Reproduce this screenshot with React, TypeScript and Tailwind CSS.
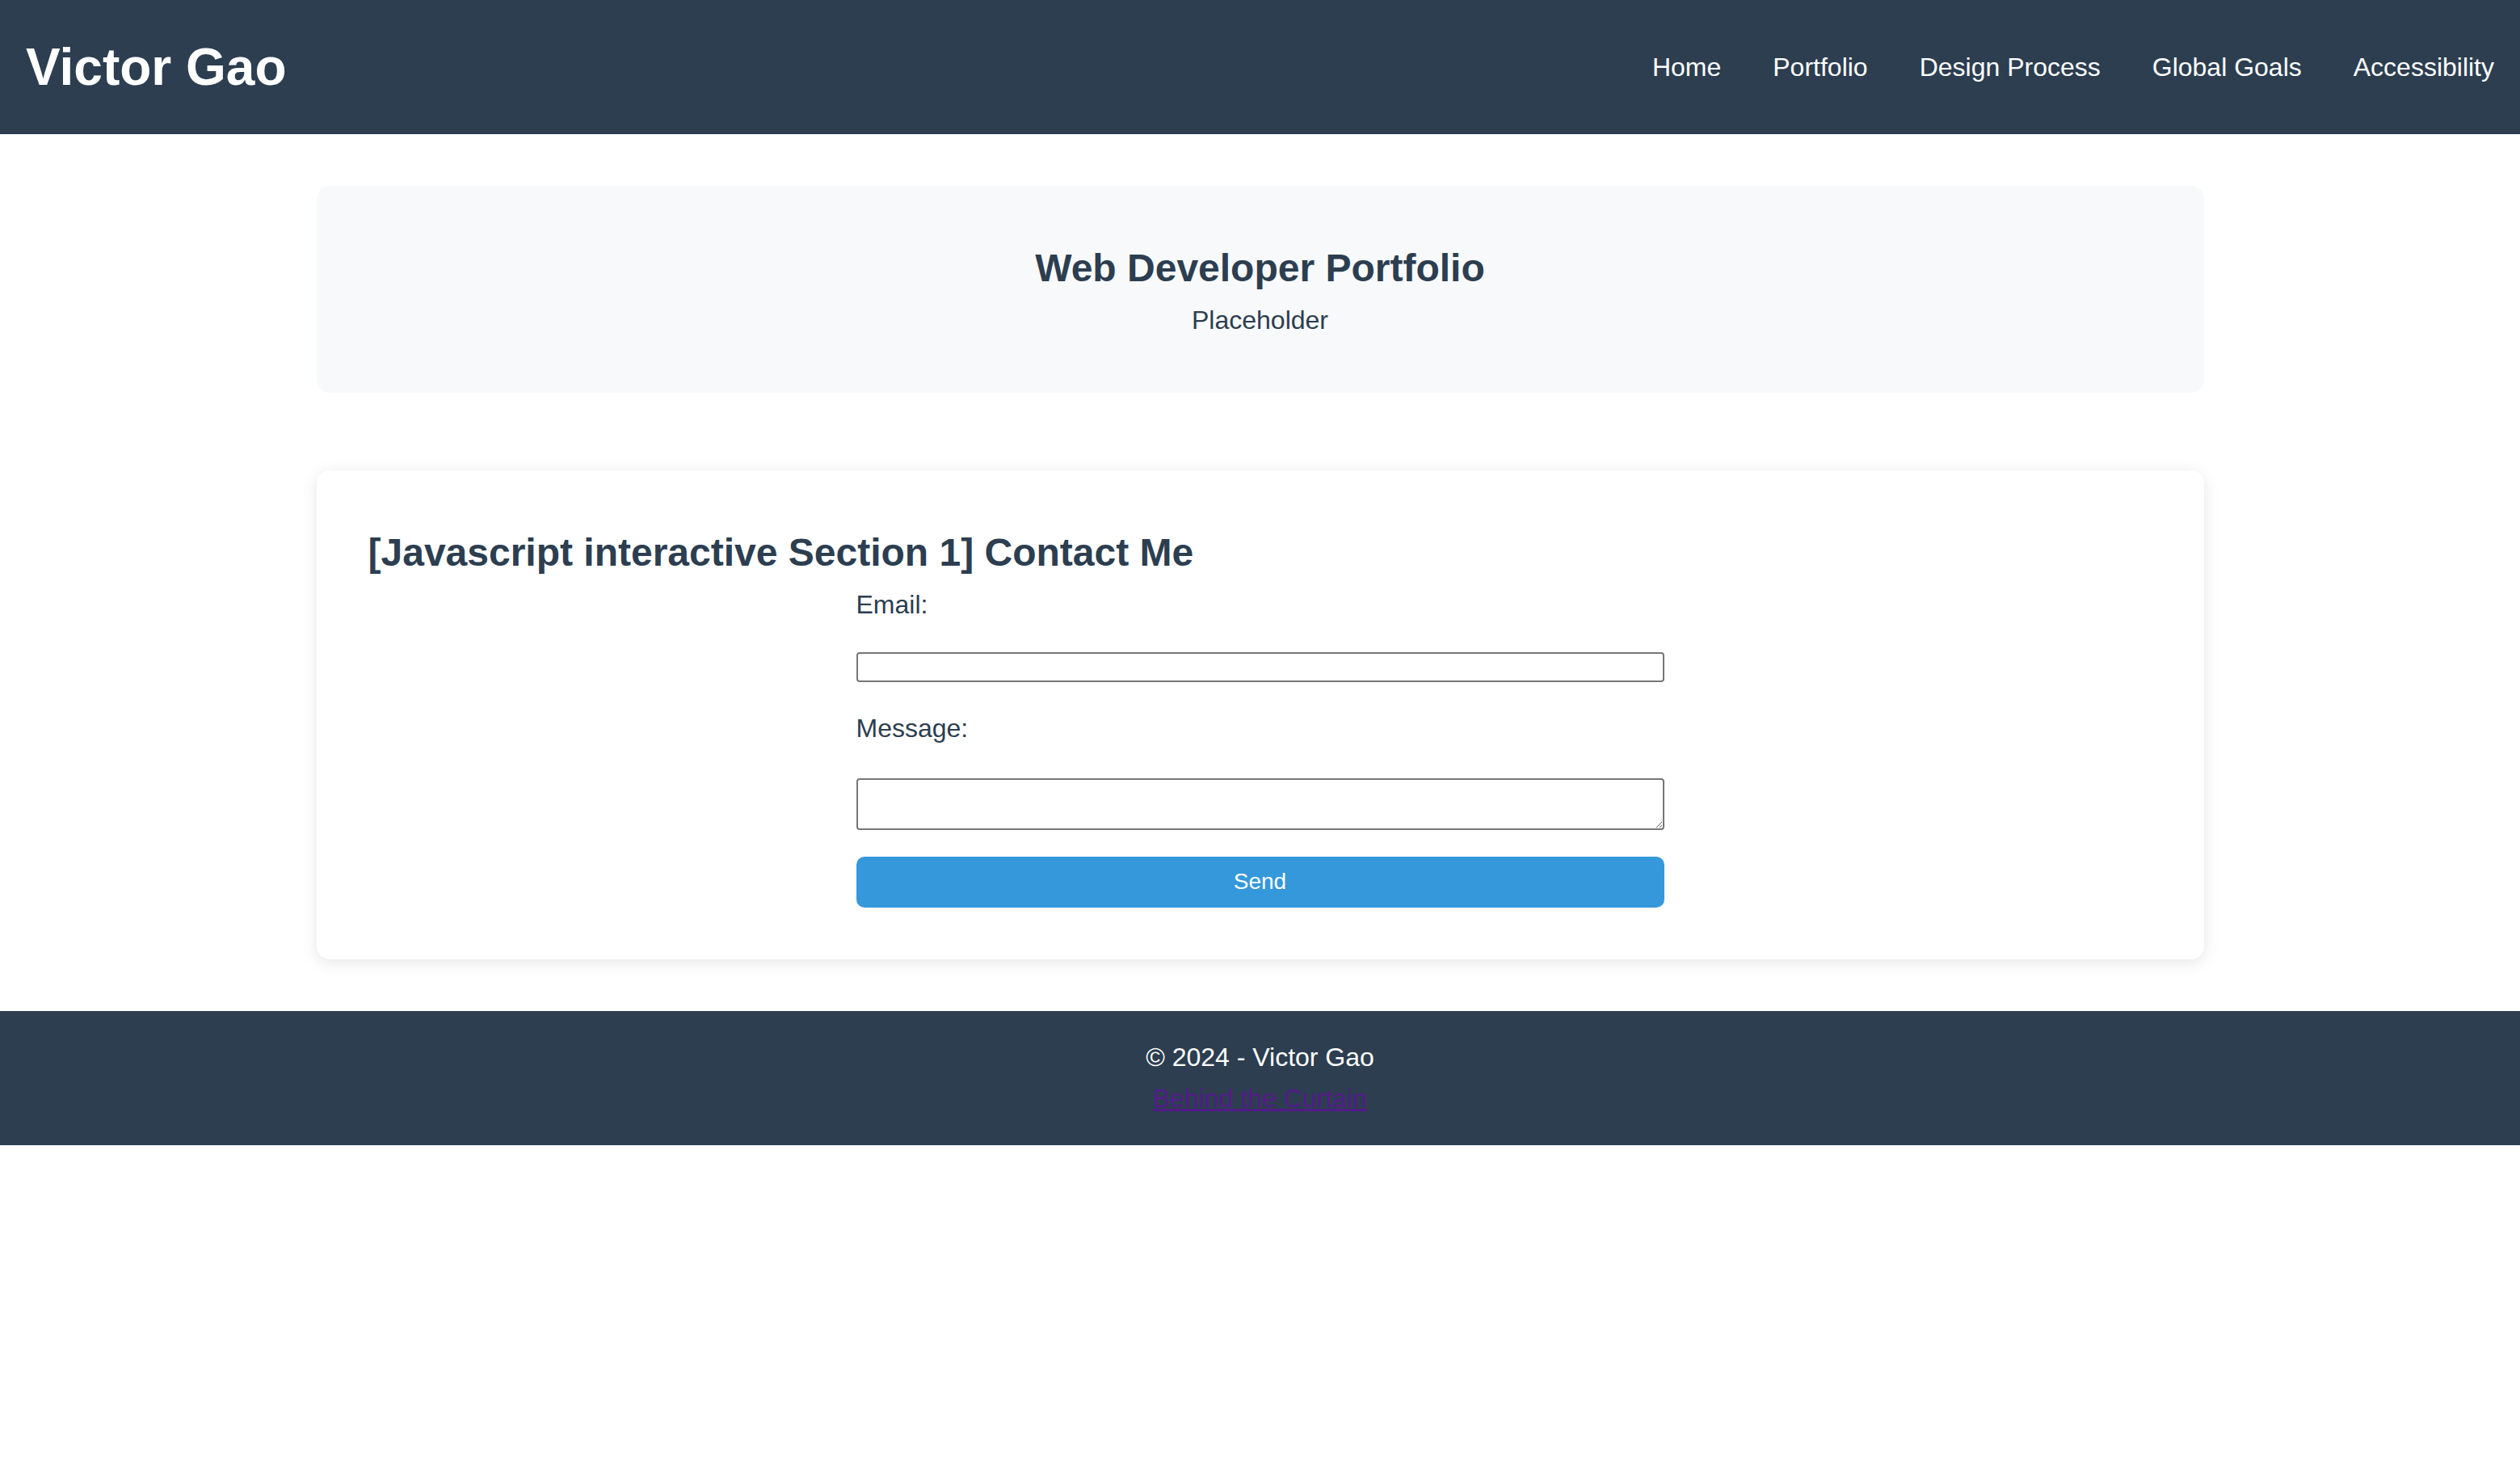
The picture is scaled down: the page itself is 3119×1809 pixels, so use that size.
export default function App() {
  const links = ["Home", "Portfolio", "Design Process", "Global Goals", "Accessibility"];

  return (
    <div className="min-h-screen bg-white text-[#2c3e50] leading-[1.6]" style={{ fontFamily: '"Liberation Sans", Arial, sans-serif' }}>
      <header className="flex items-center justify-between bg-[#2c3e50] px-[32px] py-[32px] text-white">
        <h1 className="m-0 text-[64px] font-bold leading-[1.6]">Victor Gao</h1>
        <nav className="flex gap-[64px] text-[32px]">
          {links.map((l) => (
            <a key={l} href="#" className="text-white no-underline">
              {l}
            </a>
          ))}
        </nav>
      </header>

      <main className="mx-auto w-[2336px] pt-[64px] pb-[64px]">
        <section className="rounded-[16px] bg-[#f8f9fa] p-[64px] text-center">
          <h2 className="m-0 text-[48px] font-bold leading-[1.6]">Web Developer Portfolio</h2>
          <p className="m-0 text-[32px]">Placeholder</p>
        </section>

        <section className="mt-[96px] rounded-[16px] bg-white p-[64px] shadow-[0_4px_20px_rgba(0,0,0,0.1)]">
          <h2 className="m-0 text-[48px] font-bold leading-[1.6]">[Javascript interactive Section 1] Contact Me</h2>
          <form className="mx-auto flex w-[1000px] flex-col" onSubmit={(e) => e.preventDefault()}>
            <label className="text-[32px]">Email:</label>
            <input type="email" className="mt-[33px] h-[37px] rounded-[4px] border-2 border-[#767676] bg-white" />
            <label className="mt-[32px] text-[32px]">Message:</label>
            <textarea className="mt-[35px] h-[64px] resize-y rounded-[4px] border-2 border-[#767676] bg-white" />
            <button
              type="submit"
              className="mt-[33px] h-[63px] rounded-[10px] bg-[#3498db] text-[28px] leading-none text-white"
            >
              Send
            </button>
          </form>
        </section>
      </main>

      <footer className="bg-[#2c3e50] py-[32px] text-center text-[32px] text-white">
        <p className="m-0">© 2024 - Victor Gao</p>
        <a href="#" className="text-[#551a8b] underline">
          Behind the Curtain
        </a>
      </footer>
    </div>
  );
}
